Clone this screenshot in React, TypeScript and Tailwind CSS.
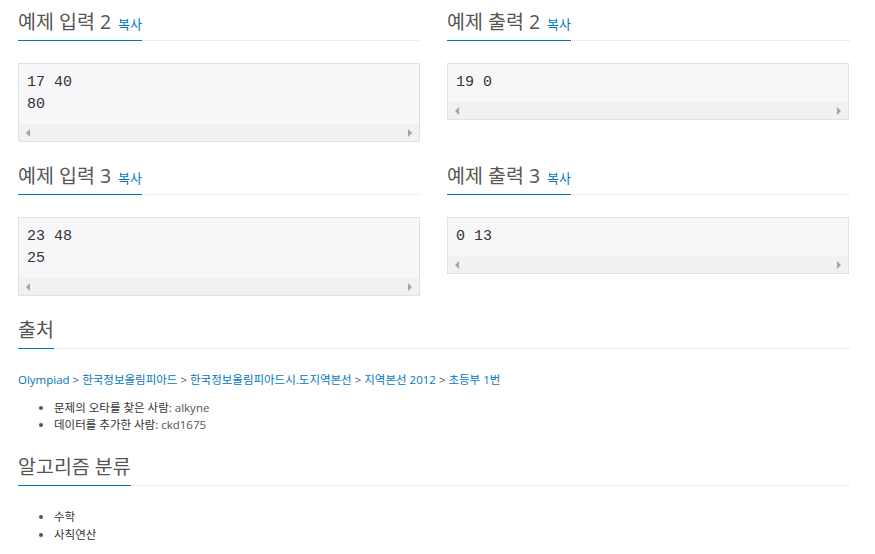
const font = { fontFamily: '"Open Sans", "Noto Sans CJK KR", sans-serif' };

function Headline({ title, copy }: { title: string; copy?: boolean }) {
  return (
    <div className="flex border-b border-dotted border-[#dcdcdc] text-[#555]">
      <div className="-mb-px flex items-baseline border-b border-[#0076c0] pb-[6px]">
        <span className="text-[19.5px] leading-[24px]">{title}</span>
        {copy && <a className="ml-[7px] text-[13px] leading-[20px] text-[#0076c0]">복사</a>}
      </div>
    </div>
  );
}

function Sample({ title, lines }: { title: string; lines: string[] }) {
  return (
    <section>
      <Headline title={title} copy />
      <div className="mt-[22px] border border-[#e1e1e8] bg-[#f7f7f9]">
        <pre className="pl-[8px] pt-[8px] pb-[8px] text-[15px] leading-[22px] text-[#333]" style={{ fontFamily: '"Liberation Mono", monospace' }}>
          {lines.join("\n")}
        </pre>
        <div className="flex h-[17px] items-center justify-between bg-[#f1f1f1] px-[7px]">
          <svg width="5" height="8" viewBox="0 0 5 8"><path d="M4 0 L0 4 L4 8 Z" fill="#a3a3a3" /></svg>
          <svg width="5" height="8" viewBox="0 0 5 8"><path d="M1 0 L5 4 L1 8 Z" fill="#a3a3a3" /></svg>
        </div>
      </div>
    </section>
  );
}

const crumbs = ["Olympiad", "한국정보올림피아드", "한국정보올림피아드시.도지역본선", "지역본선 2012", "초등부 1번"];

export default function App() {
  return (
    <main className="min-h-screen bg-white" style={font}>
      <div className="ml-[18px] w-[831px] pt-[10px]">
        <div className="grid grid-cols-2 gap-x-[27px] gap-y-[22px]">
          <Sample title="예제 입력 2" lines={["17 40", "80"]} />
          <Sample title="예제 출력 2" lines={["19 0"]} />
          <Sample title="예제 입력 3" lines={["23 48", "25"]} />
          <Sample title="예제 출력 3" lines={["0 13"]} />
        </div>

        <section className="mt-[22px]">
          <Headline title="출처" />
          <div className="mt-[22px] text-[11.5px] leading-[17px] text-[#555]">
            {crumbs.map((c, i) => (
              <span key={i}>
                {i > 0 && " > "}
                <a className="text-[#0076c0]">{c}</a>
              </span>
            ))}
          </div>
          <ul className="mt-[11px] list-disc pl-[36px] text-[11.5px] leading-[17px] text-[#333] marker:text-[#555]">
            <li>문제의 오타를 찾은 사람: <a className="text-[#555]">alkyne</a></li>
            <li>데이터를 추가한 사람: <a className="text-[#555]">ckd1675</a></li>
          </ul>
        </section>

        <section className="mt-[22px]">
          <Headline title="알고리즘 분류" />
          <ul className="mt-[22px] list-disc pl-[36px] text-[11.5px] leading-[18px] text-[#333] marker:text-[#555]">
            <li>수학</li>
            <li>사칙연산</li>
          </ul>
        </section>
      </div>
    </main>
  );
}
